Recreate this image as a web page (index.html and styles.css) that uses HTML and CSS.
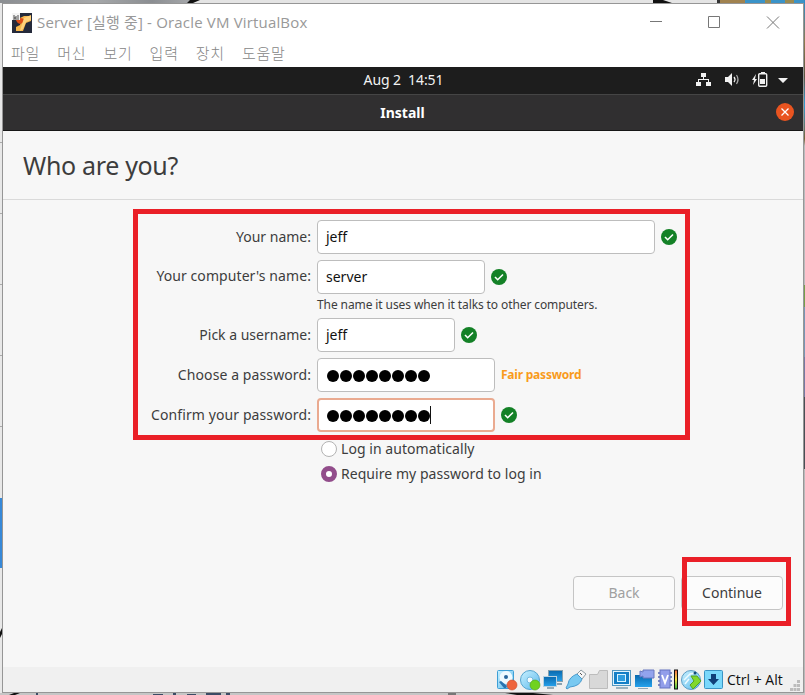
FILE: index.html
```
<!DOCTYPE html>
<html lang="ko">
<head>
<meta charset="utf-8">
<title>Server - Oracle VM VirtualBox</title>
<link rel="stylesheet" href="styles.css">
</head>
<body>
<svg class="backdrop" width="805" height="695" viewBox="0 0 805 695">
  <defs>
    <linearGradient id="top" x2="1" y2="0"><stop offset="0" stop-color="#8b8e92"/><stop offset=".5" stop-color="#a6a8aa"/><stop offset=".8" stop-color="#8b8e92"/><stop offset="1" stop-color="#a5a7aa"/></linearGradient>
    <linearGradient id="side" x2="0" y2="1"><stop offset="0" stop-color="#2b8ccb"/><stop offset=".06" stop-color="#8d7a4e"/><stop offset=".11" stop-color="#5b5541"/><stop offset=".15" stop-color="#2f9bd0"/><stop offset=".2" stop-color="#7a6438"/><stop offset=".21" stop-color="#b9bbbd"/><stop offset="1" stop-color="#b9b9b9"/></linearGradient>
  </defs>
  <rect width="805" height="695" fill="#dcdcdc"/>
  <rect width="190" height="3" fill="url(#top)"/>
  <path d="M190 3L194 0H805V3z" fill="#e4e4e4"/>
  <path d="M187 3L190 0h10l-7 3zM653 0h10l9 3H653z" fill="#111"/>
  <path d="M717 0h3v3h-3z" fill="#333"/><path d="M720 0h25v3h-25z" fill="#a0824f"/><path d="M745 0h60v3h-60z" fill="#3a93c8"/><path d="M765 0h6v3h-6zM785 0h9v3h-9z" fill="#9a8a50"/>
  <rect y="3" width="2" height="692" fill="#e8e8e8"/>
  <path d="M0 142.500h2M0 213.500h2M0 284.500h2M0 355.500h2M0 426.500h2" stroke="#aaa"/>
  <rect y="498" width="2" height="70" fill="#3789d8"/>
  <path d="M0 632l2-4v6l-2 4z" fill="#111"/>
  <rect x="804" y="0" width="1" height="695" fill="url(#side)"/>
  <path d="M804 285h1v22h-1z" fill="#74a04a"/><path d="M804 307h1v50h-1z" fill="#7895b5"/><path d="M804 357h1v40h-1z" fill="#7778a3"/><path d="M804 397h1v72h-1z" fill="#4a4e55"/>
  <rect y="693" width="805" height="2" fill="#c6c6c6"/>
  <path d="M9 695l5-2h6l-5 2zM505 693h28l20 2h-36z" fill="#111"/>
  <path d="M36 693h2v2h-2zM153 694h10v1h-10zM173 693h3v2h-3zM187 694h9v1h-9zM206 693h15v2h-15zM226 693h4v2h-4z" fill="#3b4b65"/>
  <path d="M448 693h8v2h-8z" fill="#777"/>
</svg>
<div class="window">
  <header class="titlebar">
    <svg class="app-icon" width="20" height="20" viewBox="0 0 20 20"><rect width="20" height="20" fill="#252a3b"/><path d="M4 7l8-4 7 0v5l-5 2-3 8H4v-4l4-2 1-3z" fill="#f6b64c"/><path d="M4 7c3-3 7-2 9 0-2 4-6 5-8 2z" fill="#dc4c16"/><path d="M12 5l7-3v5l-5 2-3 7-3 2 2-7z" fill="#ffd27b"/><path d="M0 0h8v7H0z" fill="#f4f4f4"/><path d="M2 2v3h2V3M6 2v3M1 6h6" stroke="#222" stroke-width=".8" fill="none"/></svg>
    <span class="app-title">Server [실행 중] - Oracle VM VirtualBox</span>
    <svg class="controls" width="130" height="14" viewBox="0 0 130 14"><path d="M0 5.500h12M58.500 .5h11v11h-11zM117 .5l12 12M129 .5l-12 12" fill="none" stroke="#777"/></svg>
  </header>
  <nav class="menu"><span>파일</span><span>머신</span><span>보기</span><span>입력</span><span>장치</span><span>도움말</span></nav>
  <div class="panel">
    <span class="clock">Aug 2&nbsp; 14:51</span>
    <svg class="tray" width="94" height="16" viewBox="0 0 94 16"><g fill="#f2f2f2"><path d="M5 1h5v4H5zM0 10h5v4H0zM10 10h5v4h-5z"/><path d="M7 5h1v2h5v3h-1V8H3v2H2V7h5z"/><path d="M29 5h3l4-4v13l-4-4h-3z"/><path d="M60 2l-4 6h2l-1 5 4-6h-2zM64 7h5v5h-5zM65 0h4v2h-4zM82 6h10l-5 5z"/></g><g fill="none" stroke="#f2f2f2"><path d="M38 5q2 2.500 0 5" stroke-width="1.300"/><path d="M40.500 3q3 4.500 0 9" stroke="#aaa" stroke-width="1.200"/><rect x="62.700" y="1.700" width="8" height="12.600" rx="1" stroke-width="1.400"/></g></svg>
  </div>
  <div class="installer-bar"><b>Install</b>
    <svg class="close" width="18" height="18" viewBox="0 0 18 18"><circle cx="9" cy="9" r="9" fill="#e95420"/><path d="M5.500 5.500l7 7M12.500 5.500l-7 7" stroke="#fff" stroke-width="1.300"/></svg>
  </div>
  <main class="page">
    <h1><span>Who are you?</span></h1>
    <div class="form">
      <label class="l1">Your name:</label>
      <div class="field"><span class="input full">jeff</span><svg class="ok" viewBox="0 0 16 16"><circle cx="8" cy="8" r="8"/><path d="M4 8l2.700 2.700L12 5.500"/></svg></div>
      <label class="l2">Your computer's name:</label>
      <div class="field"><span class="input host">server</span><svg class="ok" viewBox="0 0 16 16"><circle cx="8" cy="8" r="8"/><path d="M4 8l2.700 2.700L12 5.500"/></svg></div>
      <p class="hint"><span>The name it uses when it talks to other computers.</span></p>
      <label class="l3">Pick a username:</label>
      <div class="field"><span class="input user">jeff</span><svg class="ok" viewBox="0 0 16 16"><circle cx="8" cy="8" r="8"/><path d="M4 8l2.700 2.700L12 5.500"/></svg></div>
      <label class="l4">Choose a password:</label>
      <div class="field"><span class="input pass"><i></i><i></i><i></i><i></i><i></i><i></i><i></i><i></i></span><b class="strength">Fair password</b></div>
      <label class="l5">Confirm your password:</label>
      <div class="field"><span class="input pass focus"><i></i><i></i><i></i><i></i><i></i><i></i><i></i><i></i><span class="caret"></span></span><svg class="ok" viewBox="0 0 16 16"><circle cx="8" cy="8" r="8"/><path d="M4 8l2.700 2.700L12 5.500"/></svg></div>
      <div class="choices">
        <div class="choice"><span class="radio"></span><span class="c1">Log in automatically</span></div>
        <div class="choice"><span class="radio on"></span><span class="c2">Require my password to log in</span></div>
      </div>
    </div>
    <div class="actions"><span class="button back">Back</span><span class="button next">Continue</span></div>
  </main>
  <footer class="status">
    <svg width="228" height="22" viewBox="0 0 228 22">
      <defs><linearGradient id="sky" x2="1" y2="1"><stop stop-color="#c9f1ff"/><stop offset="1" stop-color="#5cb9ec"/></linearGradient><linearGradient id="blue" x2="0" y2="1"><stop stop-color="#0868ad"/><stop offset="1" stop-color="#27a2ec"/></linearGradient><linearGradient id="load" x2="0" y2="1"><stop stop-color="#f26a45"/><stop offset=".5" stop-color="#f5e34d"/><stop offset="1" stop-color="#38b944"/></linearGradient></defs>
      <rect x=".5" y="1.500" width="16" height="18" rx="1" fill="url(#sky)" stroke="#3c9fd6"/><circle cx="9" cy="8.500" r="6.500" fill="#eefaff"/><circle cx="9" cy="8" r="2" fill="#27669c"/><path d="M2 13l2-1 6 5-1 2H7z" fill="#2a74b0"/><circle cx="15" cy="16" r="5" fill="#ee633c" stroke="#cc4b2b" stroke-width=".6"/>
      <circle cx="33" cy="11" r="9.500" fill="url(#sky)" stroke="#55a5d0"/><circle cx="33" cy="11" r="3" fill="#f2fbff" stroke="#77bade"/><circle cx="38" cy="16" r="5" fill="#70d21f" stroke="#4ca31a" stroke-width=".6"/>
      <rect x="51.500" y="1.500" width="14" height="11" fill="url(#blue)" stroke="#87a1af"/><path d="M59 14h6v2h-6z" fill="#8ba2b0"/><rect x="46.500" y="7.500" width="13" height="10" fill="url(#blue)" stroke="#b8d2e1"/><path d="M50 18h7v2h-7z" fill="#98acb7"/>
      <path d="M80 5l4-4 5 4-4 5z" fill="#f6f6f6" stroke="#909da4"/><path d="M71 15q1-7 9-10l5 5q-2 7-12 8l-3 2-1-1z" fill="#78c9f1" stroke="#4b9bcd"/><path d="M83 4l2 2" stroke="#555"/>
      <path d="M92.500 19.500v-14h8l2-4h8v18z" fill="#d8d8d8" stroke="#bcbcbc"/>
      <rect x="115.500" y="1.500" width="18" height="15" fill="#e2f4fd" stroke="#5398c1"/><path d="M117 3h15v12h-15z" fill="#147fc6"/><rect x="120.500" y="5.500" width="8" height="7" fill="#2e9ddf" stroke="#d8f3ff"/><path d="M119 18h12v2h-12z" fill="#9db4c0"/>
      <path d="M138 6h17v12h-17z" fill="url(#blue)"/><path d="M141 19h10v1h-10z" fill="#92a5b1"/><path d="M146 3l-3-1v6l3-1v2h11V1h-11z" fill="#92a3ed" stroke="#6879c0"/>
      <path d="M161 4h14M161 8h14M161 12h14M161 16h14" stroke="#5666ad" stroke-width="1.500"/><rect x="163" y="1" width="10" height="18" fill="#929eea" stroke="#6472c0"/><path d="M165 6l3 8 3-8" fill="none" stroke="#fff" stroke-width="1.800"/>
      <rect x="177.500" y="1" width="3" height="19" fill="url(#load)" stroke="#111"/>
      <circle cx="194" cy="11" r="9.500" fill="url(#sky)" stroke="#5b9dc5"/><path d="M187 11l6-6 5-1M188 15l4-5" stroke="#edfaff" stroke-width="1.500" fill="none"/><path d="M194 7h6l4 5-8 8-3-4 4-4z" fill="#81d82c" stroke="#55a51f"/><circle cx="198" cy="4" r="1.500" fill="#124a77"/>
      <rect x="207.500" y="1.500" width="18" height="18" rx="1" fill="#7ad8fb" stroke="#3b94c4"/><path d="M214 5h5v5h3l-5.500 6L211 10h3z" fill="#103f78"/>
    </svg>
    <span class="hostkey">Ctrl + Alt</span>
    <svg class="grip" width="10" height="11" viewBox="0 0 10 11"><path d="M7 0h3v3H7zM3.500 4h3v3h-3zM7 4h3v3H7zM0 8h3v3H0zM3.500 8h3v3h-3zM7 8h3v3H7z" fill="#bcbcbc"/></svg>
  </footer>
</div>
<div class="mark mark-form"></div>
<div class="mark mark-next"></div>
</body>
</html>
```
FILE: styles.css
```
* { box-sizing: border-box; }
body { margin: 0; width: 805px; height: 695px; padding: 3px 0 0 2px; overflow: hidden; position: relative; font: 14px/20px "Noto Sans", sans-serif; color: #3d3d3d; }
span, b, label { white-space: nowrap; }
.backdrop { position: absolute; left: 0; top: 0; z-index: -1; }
.window { width: 802px; height: 690px; border: 1px solid #969696; background: #f7f7f7; display: flex; flex-direction: column; }
.titlebar { height: 38px; background: #fff; display: flex; align-items: center; padding: 0 23px 2px 9px; color: #999; }
.app-icon { margin-top: 2px; }
.app-title { margin-left: 5px; font: 400 15px/22px "Open Sans", "Noto Sans CJK KR", sans-serif; letter-spacing: .17px; }
.controls { margin-left: auto; margin-top: 2px; }
.menu { height: 25px; background: #fff; display: flex; gap: 17.1px; padding: 0 8px; font: 300 15px/22px "Noto Sans CJK KR", sans-serif; color: #858585; letter-spacing: .75px; }
.panel { height: 27px; background: #1d1d1d; color: #f2f2f2; display: grid; grid-template-columns: 1fr auto 1fr; align-items: center; padding: 0 13px 1px 14px; }
.clock { grid-column: 2; letter-spacing: -.08px; }
.tray { justify-self: end; }
.installer-bar { height: 37px; background: #302f30; border-top: 1px solid #454545; border-bottom: 1px solid #161616; color: #fff; display: grid; grid-template-columns: 1fr auto 1fr; align-items: center; padding: 0 9px 1px 8px; }
.installer-bar b { grid-column: 2; padding-top: 2px; }
.close { justify-self: end; }
.page { height: 536px; display: flex; flex-direction: column; }
h1 { margin: 0; height: 69px; border-bottom: 1px solid #dadada; padding: 17px 20px; font-size: 25px; line-height: 34px; font-weight: 400; letter-spacing: -.33px; }
.form { display: grid; grid-template-columns: 308px 1fr; grid-template-rows: 34px 34px 12px 34px 34px 34px auto; gap: 6px; padding-top: 20px; }
.form > label { text-align: right; line-height: 33px; }
.form > .l2 { line-height: 32px; letter-spacing: .08px; }
.l4, .l5 { letter-spacing: .1px; }
.field { display: flex; align-items: center; gap: 6px; }
.input { height: 34px; border: 1px solid #bdbdbd; border-radius: 4px; background: #fff; color: #111; padding-left: 8px; line-height: 32px; }
.full { width: 338px; } .host { width: 168px; } .user { width: 138px; } .pass { width: 178px; }
.pass { display: flex; align-items: center; gap: 1px; padding-top: 2px; padding-left: 9px; }
.pass i { width: 12px; height: 12px; border-radius: 50%; background: #000; }
.focus { border: 2px solid #eaaa90; padding-left: 8px; }
.caret { width: 1px; height: 18px; background: #111; margin: -2px 0 0 -1px; }
.ok { width: 16px; height: 16px; fill: #148127; }
.ok path { fill: none; stroke: #fff; stroke-width: 1.6; }
.hint { grid-column: 2; margin: -4px 0 0; font-size: 12px; line-height: 18px; letter-spacing: -.1px; }
.strength { color: #f99b1c; font-size: 12px; letter-spacing: -.22px; }
.choices { grid-column: 2; padding: 1px 0 0 4px; display: grid; gap: 5px; }
.choice { display: flex; align-items: center; gap: 4px; height: 20px; letter-spacing: .05px; }
.radio { width: 16px; height: 16px; border: 1px solid #b3b3b3; border-radius: 50%; background: #fff; }
.radio.on { border: 5.500px solid #924d8b; }
.actions { margin-top: auto; margin-bottom: 57px; padding-right: 20px; display: flex; justify-content: flex-end; gap: 6px; }
.button { width: 102px; height: 34px; border: 1px solid #c5c5c5; border-radius: 4px; background: #fcfcfc; text-align: center; line-height: 32px; }
.back { color: #a0a0a0; background: #fafafa; }
.status { height: 25px; background: #f0f0f0; display: flex; align-items: center; padding: 1px 3px 0 494px; color: #111; }
.hostkey { margin-left: 2px; font: 14px/20px "Open Sans", sans-serif; letter-spacing: 0; }
.grip { margin-left: auto; margin-top: 10px; }
.mark { position: absolute; border: 5px solid #ea1f27; }
.mark-form { left: 133px; top: 209px; width: 557px; height: 231px; }
.mark-next { left: 682px; top: 557px; width: 109px; height: 69px; }
```
